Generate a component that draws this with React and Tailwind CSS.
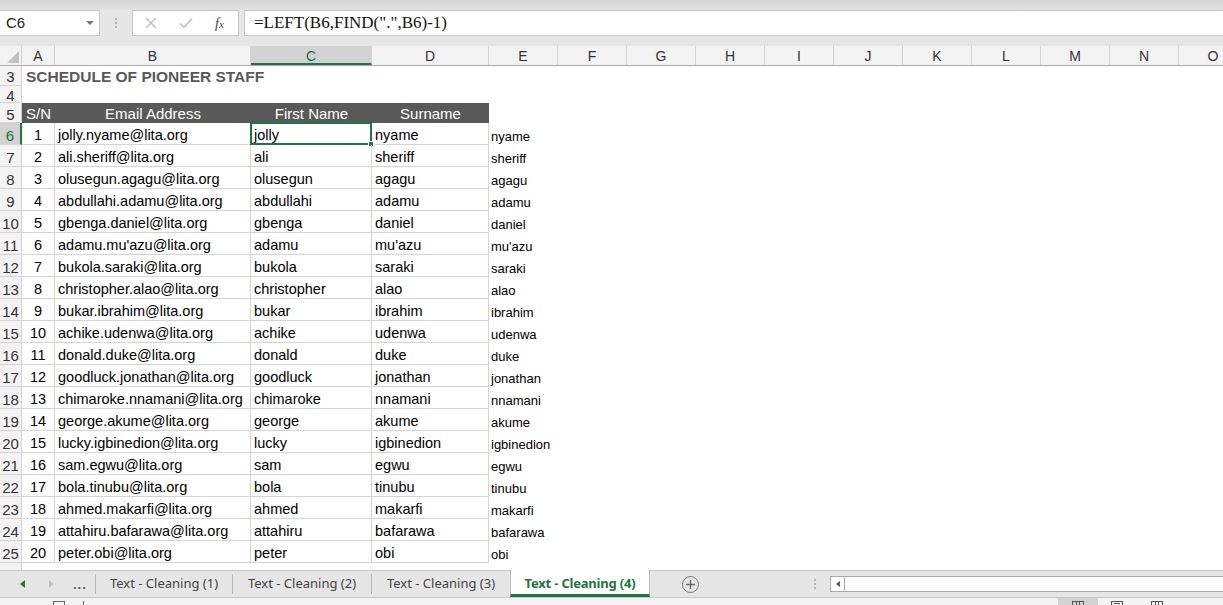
import React from "react";

const people = [
  ["jolly.nyame@lita.org", "jolly", "nyame"],
  ["ali.sheriff@lita.org", "ali", "sheriff"],
  ["olusegun.agagu@lita.org", "olusegun", "agagu"],
  ["abdullahi.adamu@lita.org", "abdullahi", "adamu"],
  ["gbenga.daniel@lita.org", "gbenga", "daniel"],
  ["adamu.mu'azu@lita.org", "adamu", "mu'azu"],
  ["bukola.saraki@lita.org", "bukola", "saraki"],
  ["christopher.alao@lita.org", "christopher", "alao"],
  ["bukar.ibrahim@lita.org", "bukar", "ibrahim"],
  ["achike.udenwa@lita.org", "achike", "udenwa"],
  ["donald.duke@lita.org", "donald", "duke"],
  ["goodluck.jonathan@lita.org", "goodluck", "jonathan"],
  ["chimaroke.nnamani@lita.org", "chimaroke", "nnamani"],
  ["george.akume@lita.org", "george", "akume"],
  ["lucky.igbinedion@lita.org", "lucky", "igbinedion"],
  ["sam.egwu@lita.org", "sam", "egwu"],
  ["bola.tinubu@lita.org", "bola", "tinubu"],
  ["ahmed.makarfi@lita.org", "ahmed", "makarfi"],
  ["attahiru.bafarawa@lita.org", "attahiru", "bafarawa"],
  ["peter.obi@lita.org", "peter", "obi"],
];

const restCols = ["E", "F", "G", "H", "I", "J", "K", "L", "M", "N", "O"];

function RowHead({ n, sel, h, pt }) {
  return (
    <div
      className={
        "w-[22px] shrink-0 flex items-center justify-center border-r border-b border-[#d4d4d4] text-[15px] leading-none " +
        (pt ? "pt-[3px] " : "pt-[2px] ") +
        (sel
          ? "bg-[#d2d2d2] text-[#217346] border-r-2 border-r-[#217346]"
          : "bg-[#f3f3f3] text-[#333]")
      }
      style={{ height: h }}
    >
      {n}
    </div>
  );
}

export default function App() {
  const sans = { fontFamily: '"Liberation Sans", Arial, sans-serif' };
  const tabFont = { fontFamily: '"Noto Sans", "Open Sans", sans-serif' };
  return (
    <div className="w-[1223px] h-[605px] overflow-hidden bg-white flex flex-col" style={sans}>
      {/* Formula bar */}
      <div className="h-[46px] shrink-0 bg-[#e6e6e6] flex flex-col">
        <div className="h-[10px] bg-gradient-to-b from-[#d4d4d4] to-[#e2e2e2]" />
        <div className="h-[26px] flex">
          <div className="w-[100px] bg-white border border-l-0 border-[#c6c6c6] flex items-center justify-between pl-[6px] pr-[5px]">
            <span className="text-[15px] text-[#222]">C6</span>
            <svg width="8" height="5" viewBox="0 0 8 5"><path d="M0 0h8L4 4z" fill="#777" /></svg>
          </div>
          <div className="w-[32px] flex flex-col items-center justify-center gap-[2px]">
            <span className="w-[2px] h-[2px] bg-[#b0b0b0]" />
            <span className="w-[2px] h-[2px] bg-[#b0b0b0]" />
            <span className="w-[2px] h-[2px] bg-[#b0b0b0]" />
          </div>
          <div className="w-[107px] bg-white border border-[#c6c6c6] flex items-center">
            <svg className="ml-[12px]" width="12" height="12" viewBox="0 0 12 12">
              <path d="M1 1L11 11M11 1L1 11" stroke="#bdbdbd" strokeWidth="1.4" />
            </svg>
            <svg className="ml-[22px]" width="14" height="12" viewBox="0 0 14 12">
              <path d="M1 6.5L5 10.5L13 1.5" stroke="#bdbdbd" strokeWidth="1.5" fill="none" />
            </svg>
            <span
              className="ml-[22px] text-[14px] italic text-[#444]"
              style={{ fontFamily: '"Liberation Serif", "Times New Roman", serif' }}
            >
              f<span className="text-[11px]">x</span>
            </span>
          </div>
          <div className="ml-[5px] flex-1 bg-white border border-r-0 border-[#c6c6c6] flex items-center pl-[9px]">
            <span
              className="text-[17px] text-[#111]"
              style={{ fontFamily: '"Liberation Serif", "Times New Roman", serif' }}
            >
              =LEFT(B6,FIND(".",B6)-1)
            </span>
          </div>
        </div>
      </div>

      {/* Grid */}
      <div className="h-[524px] shrink-0 overflow-hidden flex flex-col">
        {/* Column header */}
        <div className="h-[20px] shrink-0 flex bg-[#f3f3f3] border-b border-[#ababab] text-[14px] text-[#333]">
          <div className="w-[22px] shrink-0 border-r border-[#d4d4d4] flex items-end justify-end pr-[2px] pb-[2px]">
            <svg width="12" height="12" viewBox="0 0 12 12"><path d="M12 0V12H0z" fill="#c2c2c2" /></svg>
          </div>
          <div className="w-[33px] shrink-0 border-r border-[#d4d4d4] flex items-center justify-center pt-[2px]">A</div>
          <div className="w-[196px] shrink-0 border-r border-[#d4d4d4] flex items-center justify-center pt-[2px]">B</div>
          <div className="w-[121px] shrink-0 bg-[#d2d2d2] border-r border-[#d4d4d4] border-b-2 border-b-[#217346] flex items-center justify-center pt-[3px] text-[#217346]">C</div>
          <div className="w-[117px] shrink-0 border-r border-[#d4d4d4] flex items-center justify-center pt-[2px]">D</div>
          {restCols.map((c) => (
            <div key={c} className="w-[69px] shrink-0 border-r border-[#d4d4d4] flex items-center justify-center pt-[2px]">
              {c}
            </div>
          ))}
        </div>

        {/* Row 3 */}
        <div className="flex h-[20px] shrink-0">
          <RowHead n="3" h={20} />
          <div className="pl-[4px] pt-[2px] flex items-center text-[15.5px] font-bold text-[#595959] whitespace-nowrap">
            SCHEDULE OF PIONEER STAFF
          </div>
        </div>
        {/* Row 4 */}
        <div className="flex h-[17px] shrink-0">
          <RowHead n="4" h={17} />
        </div>
        {/* Row 5 */}
        <div className="flex h-[20px] shrink-0">
          <RowHead n="5" h={20} pt />
          <div className="flex bg-[#595959] text-white text-[15px] border-b border-[#595959]">
            <div className="w-[33px] flex items-center justify-center pt-[3px]">S/N</div>
            <div className="w-[196px] flex items-center justify-center pt-[3px]">Email Address</div>
            <div className="w-[121px] flex items-center justify-center pt-[3px]">First Name</div>
            <div className="w-[117px] flex items-center justify-center pt-[3px]">Surname</div>
          </div>
        </div>
        {/* Data rows */}
        {people.map((p, i) => (
          <div key={i} className="flex h-[22px] shrink-0">
            <RowHead n={String(i + 6)} h={22} sel={i === 0} pt />
            <div className="w-[33px] shrink-0 border-r border-b border-[#d4d4d4] flex items-center justify-center pt-[5px] text-[14.5px] text-black">
              {i + 1}
            </div>
            <div className="w-[196px] shrink-0 border-r border-b border-[#d4d4d4] flex items-center pl-[3px] pt-[5px] text-[14.5px] text-black whitespace-nowrap">
              {p[0]}
            </div>
            <div className="relative w-[121px] shrink-0 border-r border-b border-[#d4d4d4] flex items-center pl-[3px] pt-[5px] text-[14.5px] text-black">
              {p[1]}
              {i === 0 && (
                <div className="absolute -left-[1px] -top-[1px] w-[122px] h-[23px] border-2 border-[#217346]">
                  <div className="absolute -right-[4px] -bottom-[4px] w-[6px] h-[6px] bg-[#217346] border border-white" />
                </div>
              )}
            </div>
            <div className="w-[117px] shrink-0 border-r border-b border-[#d4d4d4] flex items-center pl-[3px] pt-[5px] text-[14.5px] text-black">
              {p[2]}
            </div>
            <div className="flex items-center pl-[2px] pt-[5px] text-[13px] text-black">{p[2]}</div>
          </div>
        ))}
        {/* Row 26 partial */}
        <div className="flex h-[22px] shrink-0">
          <RowHead n="26" h={22} pt />
        </div>
      </div>

      {/* Sheet tabs */}
      <div className="h-[28px] shrink-0 bg-[#e6e6e6] border-t border-b border-[#c6c6c6] flex items-stretch text-[13px] text-[#444]">
        <div className="w-[96px] shrink-0 flex items-center border-r border-[#b8b8b8] my-[3px]">
          <svg className="ml-[20px]" width="5" height="8" viewBox="0 0 5 8"><path d="M5 0V8L0 4z" fill="#217346" /></svg>
          <svg className="ml-[24px]" width="5" height="8" viewBox="0 0 5 8"><path d="M0 0V8L5 4z" fill="#c4c4c4" /></svg>
          <span className="ml-[19px] text-[#217346] font-bold text-[13px] tracking-[1px] mt-[2px]">...</span>
        </div>
        {["Text - Cleaning (1)", "Text - Cleaning (2)", "Text - Cleaning (3)"].map((t, i) => (
          <div
            key={t}
            className={
              "shrink-0 flex items-center justify-center " +
              (i === 0 ? "w-[137px] " : i === 1 ? "w-[139px] " : "w-[138px] ") +
              (i < 2 ? "border-r border-[#b8b8b8] my-[3px]" : "")
            }
            style={tabFont}
          >
            {t}
          </div>
        ))}
        <div
          className="w-[140px] shrink-0 -mt-[1px] pt-[3px] bg-white border-l border-r border-[#b8b8b8] border-b-[3px] border-b-[#217346] flex items-center justify-center text-[#217346] font-bold text-[13px] tracking-[-0.2px]"
          style={tabFont}
        >
          Text - Cleaning (4)
        </div>
        <div className="w-[180px] shrink-0 flex items-center">
          <div className="ml-[32px] w-[17px] h-[17px] rounded-full border border-[#7a7a7a] flex items-center justify-center">
            <svg width="9" height="9" viewBox="0 0 9 9"><path d="M4.5 0V9M0 4.5H9" stroke="#6a6a6a" strokeWidth="1.4" /></svg>
          </div>
          <div className="ml-[115px] flex flex-col gap-[2px]">
            <span className="w-[2px] h-[2px] bg-[#b8b8b8]" />
            <span className="w-[2px] h-[2px] bg-[#b8b8b8]" />
            <span className="w-[2px] h-[2px] bg-[#b8b8b8]" />
          </div>
        </div>
        <div className="flex-1 flex items-center">
          <div className="h-[16px] flex-1 bg-white border border-r-0 border-[#ababab] flex">
            <div className="w-[14px] border-r border-[#ababab] flex items-center justify-center">
              <svg width="4" height="6" viewBox="0 0 4 6"><path d="M4 0V6L0 3z" fill="#555" /></svg>
            </div>
          </div>
        </div>
      </div>

      {/* Status bar */}
      <div className="flex-1 bg-[#f3f3f3] flex items-start">
        <div className="ml-[53px] mt-[3px] w-[12px] h-[6px] border border-b-0 border-[#666]" />
        <div className="ml-[18px] mt-[3px] w-[1px] h-[6px] bg-[#666]" />
        <div className="ml-[974px] w-[40px] h-full bg-[#d2d2d2] flex justify-center">
          <div className="mt-[3px] w-[12px] h-[6px] border border-b-0 border-[#555] flex justify-evenly">
            <span className="w-[1px] h-full bg-[#555]" />
            <span className="w-[1px] h-full bg-[#555]" />
          </div>
        </div>
        <div className="ml-[13px] mt-[3px] w-[12px] h-[6px] border border-b-0 border-[#555] flex items-start justify-center">
          <span className="mt-[1px] w-[6px] h-[1px] bg-[#555]" />
        </div>
        <div className="ml-[28px] mt-[3px] w-[12px] h-[6px] border border-b-0 border-[#555] flex justify-evenly">
          <span className="w-[1px] h-full bg-[#555]" />
          <span className="w-[1px] h-full bg-[#555]" />
        </div>
      </div>
    </div>
  );
}
